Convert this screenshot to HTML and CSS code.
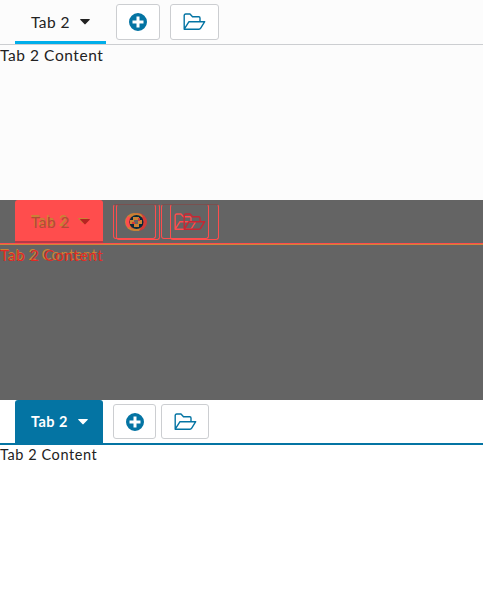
FILE: index.html
```html
<!DOCTYPE html>
<html lang="en">
<head>
<meta charset="utf-8">
<title>Tabs</title>
<link rel="stylesheet" href="styles.css">
</head>
<body>
<svg class="defs" aria-hidden="true">
  <symbol id="plus" viewBox="0 0 18 18"><path fill-rule="evenodd" fill="currentColor" d="M9 0a9 9 0 1 0 0 18A9 9 0 0 0 9 0ZM7.5 3.5h3v4h4v3h-4v4h-3v-4h-4v-3h4Z"/></symbol>
  <symbol id="folder" viewBox="0 0 23 18"><path fill="none" stroke="currentColor" stroke-width="1.4" stroke-linejoin="round" d="M1.2 16.2V2.5Q1.2 1 2.7 1H7L9.5 3.8h6.3Q17 3.8 17 5v3.3M1.2 16.2 6 8.7h15.7l-4 6.5q-.6 1-1.7 1Z"/></symbol>
  <symbol id="overlap" viewBox="0 0 22 18"><path fill="#c98335" d="M9 0a9 9 0 0 0 0 18h4V0Z"/><path fill="#ff4d4d" d="M3 3a9 9 0 0 0 0 12l3-2V5Z"/><circle cx="13" cy="9" r="9" fill="#d23b38"/><path fill="#c98335" d="M7 2q4-3 9-1l2 3H6ZM7 15l9-1-2 4H9Z"/><circle cx="11.5" cy="9" r="7" fill="#08293b"/><path fill="#c98335" d="M8 4h6v3h3v4h-3v3H9v-3H5V7h3Z"/><path fill="#646464" d="M9 7h4v4H9Z"/><path fill="#d23b38" d="M13 5h2v3h-2ZM7 9h3v2H7Z"/></symbol>
  <symbol id="caret" viewBox="0 0 10 6"><path fill="currentColor" d="M.3 0h9.4Q10 .5 9.5 1L5.6 5.1Q5 5.7 4.4 5.1L.5 1Q0 .5.3 0Z"/></symbol>
</svg>
<section class="panel light">
  <header class="bar">
    <div class="tab"><span class="label">Tab 2</span><svg class="caret"><use href="#caret"/></svg></div>
    <button class="btn add"><svg class="plus"><use href="#plus"/></svg></button>
    <button class="btn open"><svg class="folder"><use href="#folder"/></svg></button>
  </header>
  <p class="content">Tab 2 Content</p>
</section>
<section class="panel diff">
  <div class="layer light">
    <header class="bar">
      <div class="tab"><span class="label">Tab 2</span><svg class="caret"><use href="#caret"/></svg></div>
      <button class="btn add"><svg class="overlap"><use href="#overlap"/></svg></button>
      <button class="btn open"><svg class="folder"><use href="#folder"/></svg></button>
    </header>
    <p class="content">Tab 2 Content</p>
  </div>
  <div class="layer solid">
    <header class="bar">
      <div class="tab"><span class="label">Tab 2</span><svg class="caret"><use href="#caret"/></svg></div>
      <button class="btn add"></button>
      <button class="btn open"><svg class="folder"><use href="#folder"/></svg></button>
    </header>
    <p class="content">Tab 2 Content</p>
  </div>
</section>
<section class="panel solid">
  <header class="bar">
    <div class="tab"><span class="label">Tab 2</span><svg class="caret"><use href="#caret"/></svg></div>
    <button class="btn add"><svg class="plus"><use href="#plus"/></svg></button>
    <button class="btn open"><svg class="folder"><use href="#folder"/></svg></button>
  </header>
  <p class="content">Tab 2 Content</p>
</section>
</body>
</html>
```
FILE: styles.css
```css
* { box-sizing: border-box; }
body { margin: 0; background: #fff; color: #222; font-family: Lato, "Noto Sans", sans-serif; }
.defs { position: absolute; width: 0; height: 0; }
.panel { height: 200px; overflow: hidden; }
.bar { display: flex; align-items: flex-start; height: 45px; padding-left: 15px; border-bottom: 1px solid #ccced1; }
.tab { display: flex; align-items: center; padding-left: 16px; }
.label { width: 40px; font-size: 15.5px; line-height: 20px; letter-spacing: .45px; white-space: nowrap; }
.caret { width: 10px; height: 6px; }
.btn { display: flex; align-items: center; justify-content: center; margin: 4px 0 0; padding: 0; background: #fff; border: 1px solid #ccced1; border-radius: 3px; color: #0474a3; }
.plus { width: 18px; height: 18px; }
.overlap { flex: none; width: 22px; height: 18px; margin-left: -4px; }
.folder { width: 23px; height: 18px; }
.content { margin: 0; font-size: 15.5px; line-height: 20px; white-space: nowrap; }

.light { background: #fcfcfc; }
.light .tab { width: 91px; height: 44px; border-bottom: 3px solid #00aeea; padding-top: 3px; }
.light .caret { margin-left: 9px; }
.light .add { width: 44px; height: 36px; margin-left: 10px; }
.light .open { width: 49px; height: 36px; margin-left: 10px; }
.light .content { letter-spacing: .57px; }

.solid .bar { border-bottom: 2px solid #0474a3; }
.solid .tab { width: 88px; height: 43px; background: #0474a3; color: #fff; border-radius: 3px 3px 0 0; }
.solid .label { font-weight: 700; font-size: 14.5px; }
.solid .caret { margin-left: 7px; }
.solid .add { width: 43px; height: 35px; margin-left: 10px; }
.solid .open { width: 48px; height: 35px; margin-left: 5px; }
.solid .content { font-size: 14.5px; letter-spacing: .57px; }

.diff { position: relative; background: #646464; }
.diff .layer { position: absolute; inset: 0; background: transparent; }
.diff .btn { background: transparent; border-color: #ff4d4d; border-top-color: #79504f; }
.diff .light { z-index: 1; }
.diff .light .bar { border-color: #d18537; }
.diff .light .tab { border-color: transparent; color: #b34b35; }
.diff .light .caret { color: #b62422; }
.diff .light .folder { color: #c82633; }
.diff .light .content { color: #e12b24; }
.diff .solid .bar { border-color: #ff4d4d; }
.diff .solid .tab { background: #ff4d4d; color: #c98335; border-bottom: 2px solid #b33a49; }
.diff .solid .folder { color: #ff4d4d; }
.diff .solid .open .folder { stroke-width: 2; }
.diff .solid .content { color: #c98335; }
```
